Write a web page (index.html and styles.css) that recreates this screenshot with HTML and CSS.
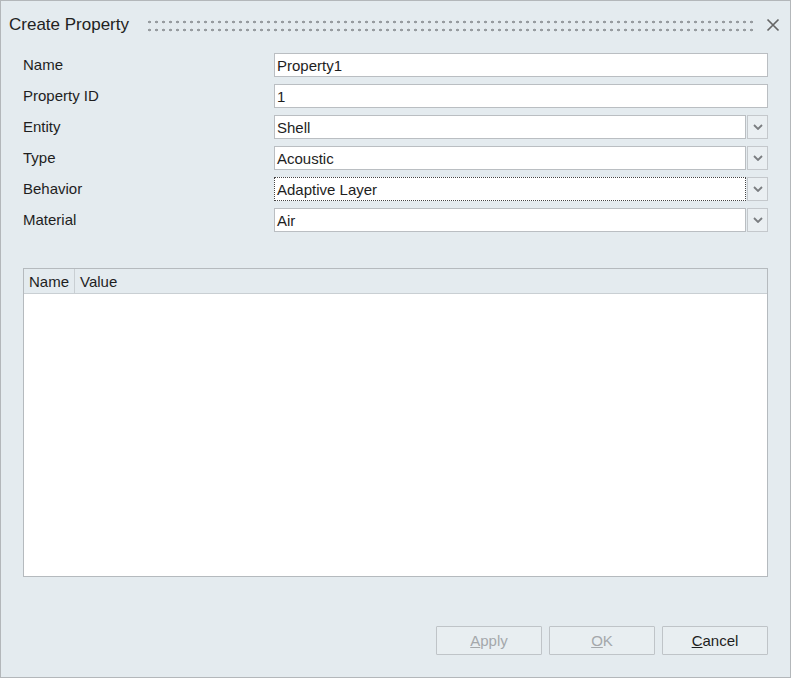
FILE: index.html
```html
<!DOCTYPE html>
<html lang="en">
<head>
  <meta charset="UTF-8">
  <title>Create Property</title>
  <link rel="stylesheet" href="styles.css">
</head>
<body>
  <div class="dialog">
    <div class="titlebar">
      <span class="title">Create Property</span>
      <div class="grip"></div>
      <svg class="close" width="14" height="14" viewBox="0 0 14 14">
        <path d="M1.5 1.5 L12.5 12.5 M12.5 1.5 L1.5 12.5" stroke="#666" stroke-width="1.7" fill="none"/>
      </svg>
    </div>

    <div class="form">
      <label>Name</label>
      <div class="field">Property1</div>

      <label>Property ID</label>
      <div class="field">1</div>

      <label>Entity</label>
      <div class="combo">
        <div class="field">Shell</div>
        <div class="drop"><svg width="10" height="6" viewBox="0 0 10 6"><path d="M1 1 L5 5 L9 1" stroke="#7a7d80" stroke-width="1.8" fill="none"/></svg></div>
      </div>

      <label>Type</label>
      <div class="combo">
        <div class="field">Acoustic</div>
        <div class="drop"><svg width="10" height="6" viewBox="0 0 10 6"><path d="M1 1 L5 5 L9 1" stroke="#7a7d80" stroke-width="1.8" fill="none"/></svg></div>
      </div>

      <label>Behavior</label>
      <div class="combo">
        <div class="field focused">Adaptive Layer</div>
        <div class="drop"><svg width="10" height="6" viewBox="0 0 10 6"><path d="M1 1 L5 5 L9 1" stroke="#7a7d80" stroke-width="1.8" fill="none"/></svg></div>
      </div>

      <label>Material</label>
      <div class="combo">
        <div class="field">Air</div>
        <div class="drop"><svg width="10" height="6" viewBox="0 0 10 6"><path d="M1 1 L5 5 L9 1" stroke="#7a7d80" stroke-width="1.8" fill="none"/></svg></div>
      </div>
    </div>

    <div class="table">
      <div class="thead">
        <div class="th th-name">Name</div>
        <div class="th">Value</div>
      </div>
      <div class="tbody"></div>
    </div>

    <div class="buttons">
      <button class="btn" disabled><u>A</u>pply</button>
      <button class="btn" disabled><u>O</u>K</button>
      <button class="btn"><u>C</u>ancel</button>
    </div>
  </div>
</body>
</html>
```

FILE: styles.css
```css
body {
  margin: 0;
  font-family: "Liberation Sans", Arial, sans-serif;
  color: #1e1e1e;
}
.dialog {
  box-sizing: border-box;
  width: 791px;
  height: 678px;
  border: 1px solid #b3b7ba;
  background-color: #e4ebef;
  display: flex;
  flex-direction: column;
  padding: 0 22px 22px 22px;
}
.titlebar {
  height: 46px;
  display: flex;
  align-items: center;
  margin-left: -14px;
  margin-right: -12px;
}
.title {
  font-size: 17px;
  color: #222;
  padding-top: 2px;
}
.grip {
  flex: 1;
  height: 12px;
  margin: 3px 13px 0 19px;
  background-image: radial-gradient(circle, #979ca0 1.2px, transparent 1.6px);
  background-size: 7px 8px;
  background-position: -2px -2px;
}
.close {
  margin-top: 2px;
}
.form {
  margin-top: 6px;
  display: grid;
  grid-template-columns: 251px 1fr;
  grid-auto-rows: 24px;
  row-gap: 7px;
}
.form label {
  font-size: 15px;
  display: flex;
  align-items: center;
  margin-top: -1px;
}
.field {
  box-sizing: border-box;
  height: 24px;
  background-color: #fff;
  border: 1px solid #babec2;
  font-size: 15px;
  padding: 0 2px;
  display: flex;
  align-items: center;
}
.field.focused {
  border: 1px dotted #444;
}
.combo {
  display: grid;
  grid-template-columns: 1fr 21px;
  column-gap: 1px;
}
.drop {
  box-sizing: border-box;
  height: 24px;
  border: 1px solid #c4c8cc;
  background-color: #eaeff2;
  display: flex;
  align-items: center;
  justify-content: center;
}
.table {
  margin-top: 36px;
  height: 309px;
  box-sizing: border-box;
  border: 1px solid #b5babe;
  background-color: #fff;
  display: flex;
  flex-direction: column;
}
.thead {
  height: 24px;
  display: flex;
  background-color: #e4ebef;
  border-bottom: 1px solid #c9cfd3;
}
.th {
  font-size: 15px;
  display: flex;
  align-items: center;
  padding-left: 5px;
}
.th-name {
  width: 45px;
  border-right: 1px solid #c9cfd3;
}
.tbody {
  flex: 1;
}
.buttons {
  margin-top: auto;
  display: flex;
  justify-content: flex-end;
  gap: 7px;
}
.btn {
  width: 106px;
  height: 29px;
  border: 1px solid #bfc4c8;
  border-radius: 1px;
  background-color: #e8eef1;
  font-family: "Liberation Sans", Arial, sans-serif;
  font-size: 15px;
  color: #1e1e1e;
  padding: 0;
}
.btn:disabled {
  color: #a4a8ab;
}
```
